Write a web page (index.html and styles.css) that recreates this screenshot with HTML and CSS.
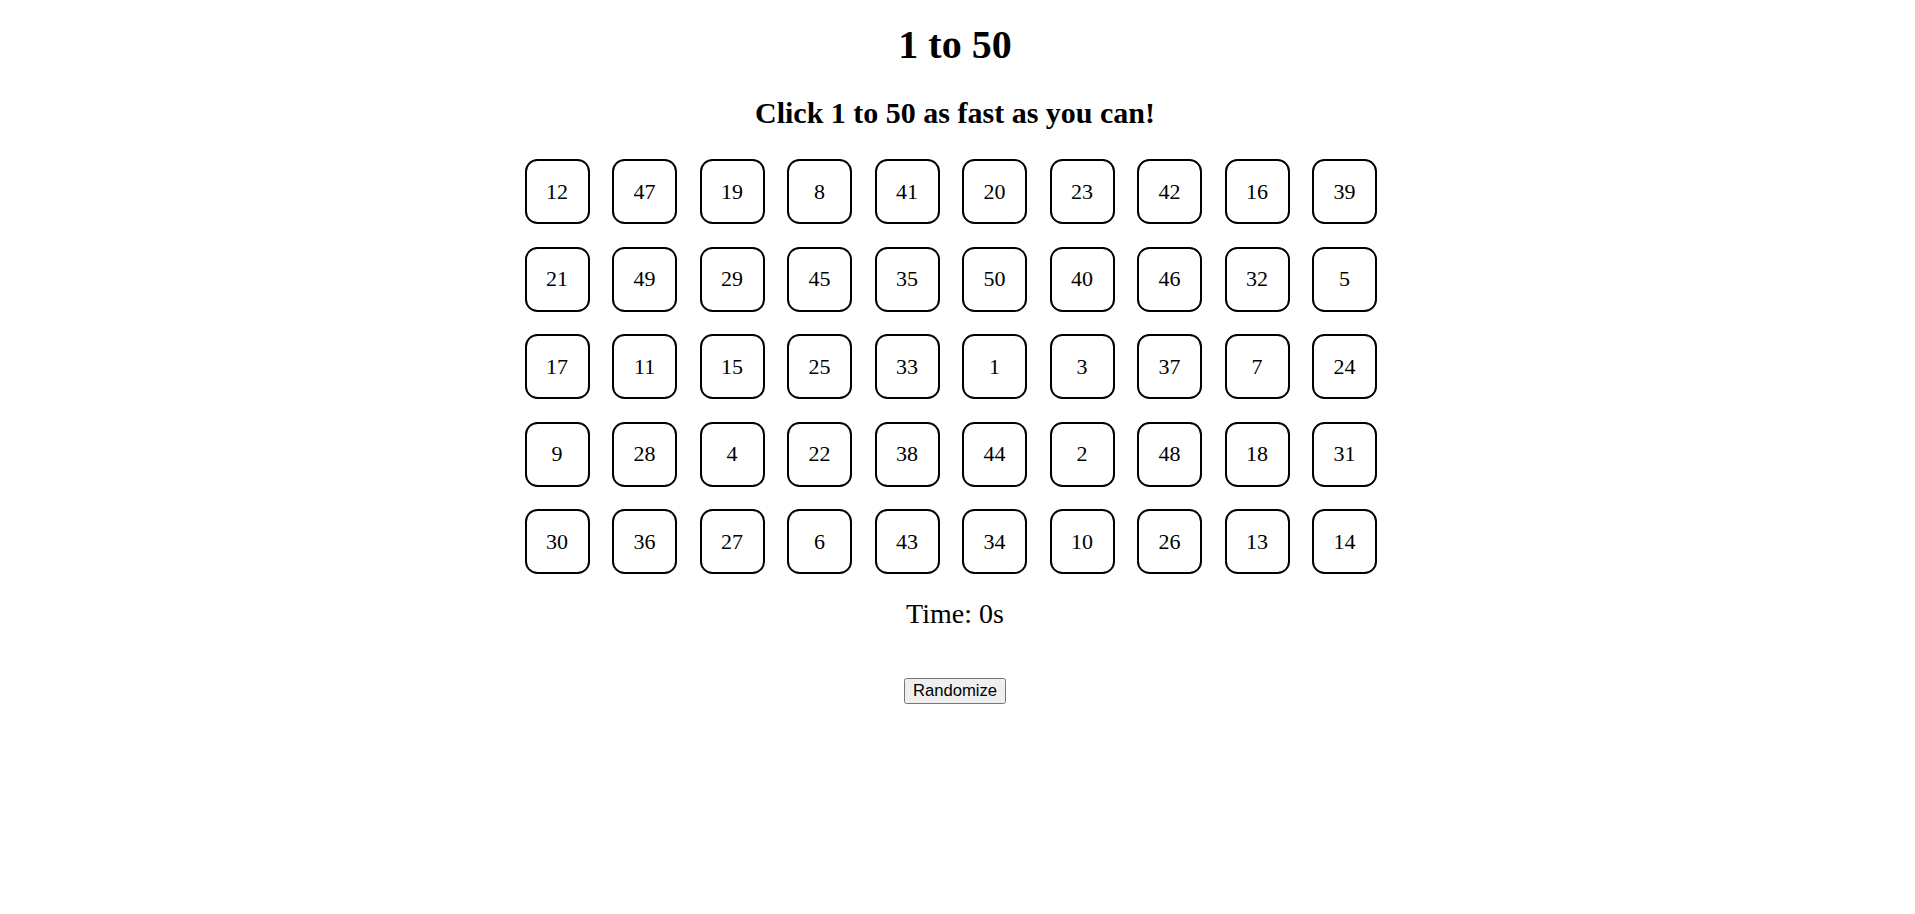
FILE: index.html
```html
<!DOCTYPE html>
<html lang="en">
<head>
<meta charset="utf-8">
<title>1 to 50</title>
<link rel="stylesheet" href="styles.css">
</head>
<body>
<main class="game">
  <h1 class="title">1 to 50</h1>
  <h2 class="subtitle">Click 1 to 50 as fast as you can!</h2>
  <div class="board">
    <div class="cell">12</div><div class="cell">47</div><div class="cell">19</div><div class="cell">8</div><div class="cell">41</div><div class="cell">20</div><div class="cell">23</div><div class="cell">42</div><div class="cell">16</div><div class="cell">39</div>
    <div class="cell">21</div><div class="cell">49</div><div class="cell">29</div><div class="cell">45</div><div class="cell">35</div><div class="cell">50</div><div class="cell">40</div><div class="cell">46</div><div class="cell">32</div><div class="cell">5</div>
    <div class="cell">17</div><div class="cell">11</div><div class="cell">15</div><div class="cell">25</div><div class="cell">33</div><div class="cell">1</div><div class="cell">3</div><div class="cell">37</div><div class="cell">7</div><div class="cell">24</div>
    <div class="cell">9</div><div class="cell">28</div><div class="cell">4</div><div class="cell">22</div><div class="cell">38</div><div class="cell">44</div><div class="cell">2</div><div class="cell">48</div><div class="cell">18</div><div class="cell">31</div>
    <div class="cell">30</div><div class="cell">36</div><div class="cell">27</div><div class="cell">6</div><div class="cell">43</div><div class="cell">34</div><div class="cell">10</div><div class="cell">26</div><div class="cell">13</div><div class="cell">14</div>
  </div>
  <p class="timer">Time: 0s</p>
  <button class="randomize" type="button">Randomize</button>
</main>
</body>
</html>
```
FILE: styles.css
```css
html, body {
  margin: 0;
  background: #ffffff;
}
body {
  font-family: "Liberation Serif", "Times New Roman", serif;
  color: #000;
  padding: 21.8px 5px 0 0;
}
.game {
  text-align: center;
}
.title {
  font-size: 40px;
  line-height: 46px;
  font-weight: bold;
  margin: 0 0 28.1px;
}
.subtitle {
  font-size: 30px;
  line-height: 34.5px;
  font-weight: bold;
  margin: 0 0 28.9px;
}
.board {
  display: grid;
  grid-template-columns: repeat(10, 65px);
  grid-auto-rows: 65px;
  gap: 22.5px;
  width: 852.5px;
  padding-right: 8.4px;
  margin: 0 auto 23.55px;
}
.cell {
  box-sizing: border-box;
  width: 65px;
  height: 65px;
  border: 2.5px solid #000;
  border-radius: 12.5px;
  display: flex;
  align-items: center;
  justify-content: center;
  font-size: 22px;
  background: #fff;
}
.timer {
  font-size: 28px;
  line-height: 32px;
  margin: 0 0 47.85px;
}
.randomize {
  display: block;
  margin: 0 auto;
  font-family: "Liberation Sans", Arial, sans-serif;
  font-size: 16.67px;
  line-height: 19.2px;
  padding: 2.5px 8px;
  color: #000;
  background: #efefef;
  border: 1.25px solid #767676;
  border-radius: 2.5px;
}
```
